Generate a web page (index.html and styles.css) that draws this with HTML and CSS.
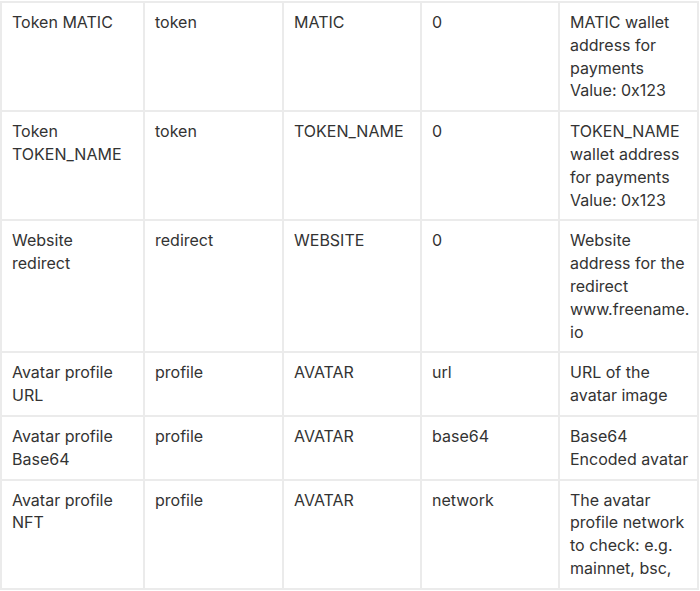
FILE: index.html
```html
<!DOCTYPE html>
<html>
<head>
<meta charset="utf-8">
<link rel="stylesheet" href="styles.css">
</head>
<body>
<table class="records">
  <colgroup>
    <col class="c1"><col class="c2"><col class="c3"><col class="c4"><col class="c5">
  </colgroup>
  <tbody>
    <tr><td>Token MATIC</td><td>token</td><td>MATIC</td><td>0</td><td class="desc">MATIC wallet address for payments Value: 0x123</td></tr>
    <tr><td>Token TOKEN_NAME</td><td>token</td><td>TOKEN_NAME</td><td>0</td><td class="desc">TOKEN_NAME wallet address for payments Value: 0x123</td></tr>
    <tr><td>Website redirect</td><td>redirect</td><td>WEBSITE</td><td>0</td><td class="desc">Website address for the redirect www.freename.<br>io</td></tr>
    <tr><td>Avatar profile URL</td><td>profile</td><td>AVATAR</td><td>url</td><td class="desc">URL of the avatar image</td></tr>
    <tr><td>Avatar profile Base64</td><td>profile</td><td>AVATAR</td><td>base64</td><td class="desc">Base64 Encoded avatar</td></tr>
    <tr><td>Avatar profile NFT</td><td>profile</td><td>AVATAR</td><td>network</td><td class="desc">The avatar profile network to check: e.g. mainnet, bsc,</td></tr>
  </tbody>
</table>
</body>
</html>
```
FILE: styles.css
```css
html, body {
  margin: 0;
  padding: 0;
  background: #ffffff;
}
body {
  font-family: Inter, "Liberation Sans", Arial, sans-serif;
  font-size: 16px;
  line-height: 22.8px;
  color: #333333;
  padding: 1px 0 0 0;
}
.records {
  border-collapse: collapse;
  table-layout: fixed;
  width: 697px;
  margin-left: 0;
}
.records td {
  border: 2px solid #ebebeb;
  padding: 8px 10px 8px 10px;
  vertical-align: top;
  text-align: left;
}
.records td.desc {
  padding-right: 6px;
}
.c1 { width: 143px; }
.c2 { width: 139px; }
.c3 { width: 138px; }
.c4 { width: 138px; }
.c5 { width: 139px; }
```
